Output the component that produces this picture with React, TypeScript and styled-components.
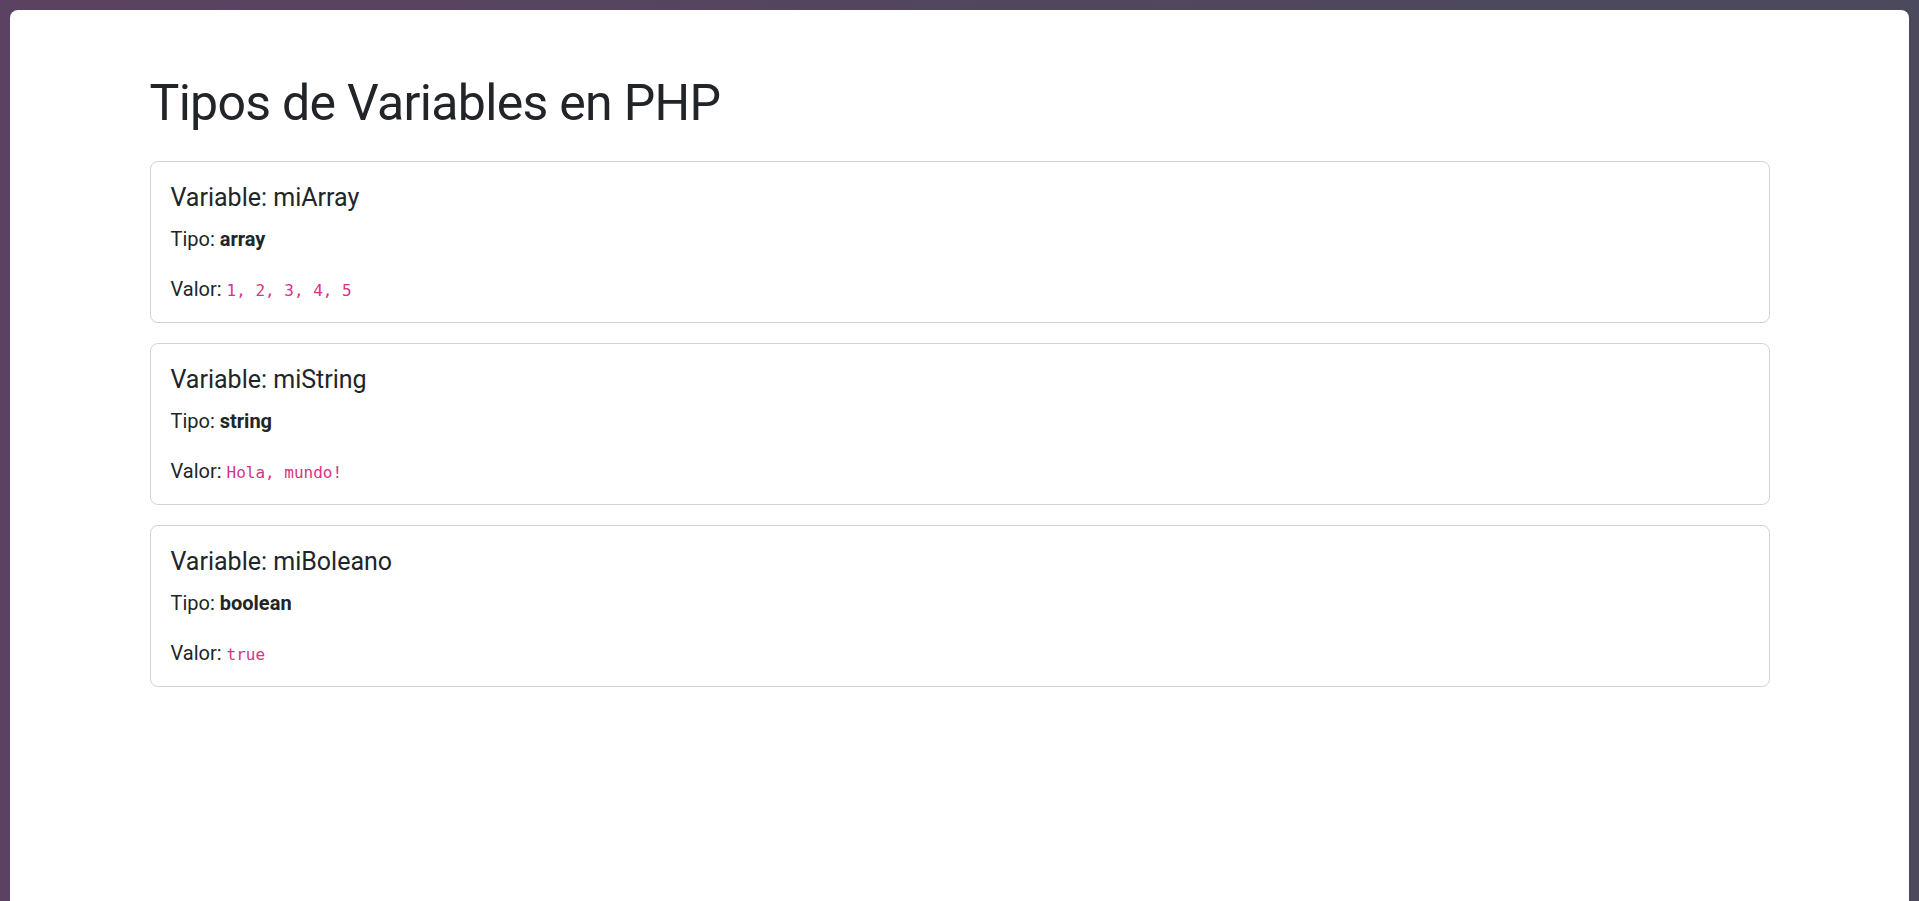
import React from 'react';
import styled, { createGlobalStyle } from 'styled-components';

const GlobalStyle = createGlobalStyle`
  html, body {
    margin: 0;
    padding: 0;
    height: 100%;
    overflow: hidden;
  }
  body {
    background: linear-gradient(90deg, #5c4262 0%, #53465f 50%, #4a4a5c 100%);
    font-family: Roboto, "Open Sans", sans-serif;
    color: #212529;
  }
`;

const variables = [
  { name: 'miArray', type: 'array', value: '1, 2, 3, 4, 5' },
  { name: 'miString', type: 'string', value: 'Hola, mundo!' },
  { name: 'miBoleano', type: 'boolean', value: 'true' },
];

export default function App() {
  return (
    <>
      <GlobalStyle />
      <Window>
        <Container>
          <Title>Tipos de Variables en PHP</Title>
          {variables.map((v) => (
            <Card key={v.name}>
              <CardTitle>Variable: {v.name}</CardTitle>
              <CardText>
                Tipo: <strong>{v.type}</strong>
              </CardText>
              <CardText>
                Valor: <Code>{v.value}</Code>
              </CardText>
            </Card>
          ))}
        </Container>
      </Window>
    </>
  );
}

const Window = styled.div`
  box-sizing: border-box;
  margin: 10px 10px 0 10px;
  height: calc(100vh - 10px);
  background: #fff;
  border-radius: 8px 8px 0 0;
  padding-top: 63px;
`;

const Container = styled.div`
  box-sizing: border-box;
  width: 1620px;
  margin: 0 auto;
`;

const Title = styled.h1`
  margin: 0 0 28px;
  font-size: 50px;
  font-weight: 400;
  line-height: 60px;
  letter-spacing: -0.7px;
`;

const Card = styled.div`
  box-sizing: border-box;
  border: 1.25px solid rgba(0, 0, 0, 0.175);
  border-radius: 8px;
  padding: 21px 20px 18px;
  margin-bottom: 20px;
`;

const CardTitle = styled.h5`
  margin: 0 0 11px;
  font-size: 25px;
  font-weight: 400;
  line-height: 30px;
`;

const CardText = styled.p`
  margin: 0 0 20px;
  font-size: 20px;
  line-height: 30px;

  &:last-child {
    margin-bottom: 0;
  }

  strong {
    font-weight: 700;
  }
`;

const Code = styled.code`
  font-family: "DejaVu Sans Mono", "Liberation Mono", monospace;
  font-size: 16px;
  line-height: 1;
  color: #d63384;
`;
